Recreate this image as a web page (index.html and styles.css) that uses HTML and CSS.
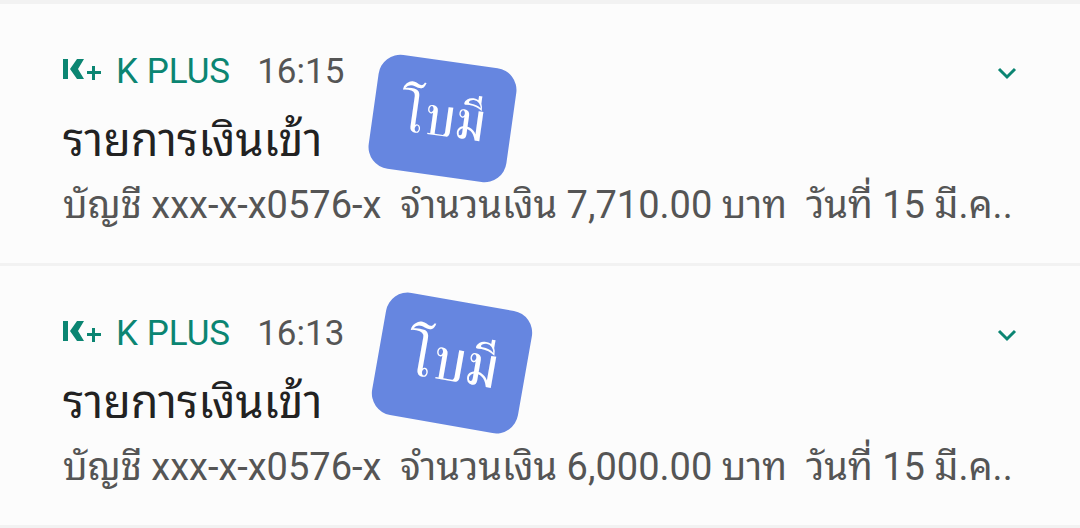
FILE: index.html
```html
<!DOCTYPE html>
<html lang="th">
<head>
    <meta charset="UTF-8">
    <meta name="viewport" content="width=device-width, initial-scale=1.0">
    <title>K PLUS</title>
    <link rel="stylesheet" href="styles.css">
</head>
<body>
    <main class="notifications">
        <article class="notification">
            <header class="notification-header">
                <svg class="logo" viewBox="0 0 40 24" aria-hidden="true">
                    <path d="M0 0h5v20H0z"/>
                    <path d="M14 0h7l-6 10 6 10h-7L7 10z"/>
                    <path d="M29 7h3v5h6v3h-6v6h-3v-6h-5v-3h5z"/>
                </svg>
                <span class="app-name">K PLUS</span>
                <time class="time">16:15</time>
                <button class="expand" type="button" aria-label="ขยาย">
                    <svg viewBox="0 0 24 24" aria-hidden="true"><path d="M5 10l8 8 8-8"/></svg>
                </button>
            </header>
            <h2 class="title">รายการเงินเข้า</h2>
            <p class="message">บัญชี xxx-x-x0576-x&nbsp; จำนวนเงิน 7,710.00 บาท&nbsp; วันที่ 15 มี.ค..</p>
            <span class="sticker sticker-small">โบมี</span>
        </article>

        <article class="notification">
            <header class="notification-header">
                <svg class="logo" viewBox="0 0 40 24" aria-hidden="true">
                    <path d="M0 0h5v20H0z"/>
                    <path d="M14 0h7l-6 10 6 10h-7L7 10z"/>
                    <path d="M29 7h3v5h6v3h-6v6h-3v-6h-5v-3h5z"/>
                </svg>
                <span class="app-name">K PLUS</span>
                <time class="time">16:13</time>
                <button class="expand" type="button" aria-label="ขยาย">
                    <svg viewBox="0 0 24 24" aria-hidden="true"><path d="M5 10l8 8 8-8"/></svg>
                </button>
            </header>
            <h2 class="title">รายการเงินเข้า</h2>
            <p class="message">บัญชี xxx-x-x0576-x&nbsp; จำนวนเงิน 6,000.00 บาท&nbsp; วันที่ 15 มี.ค..</p>
            <span class="sticker sticker-large">โบมี</span>
        </article>
    </main>
</body>
</html>
```

FILE: styles.css
```css
body {
    margin: 0;
    background-color: #fcfcfc;
    font-family: Roboto, "Noto Sans Thai Looped", "Noto Looped Thai", "Droid Sans Thai", Loma, Garuda, Waree, sans-serif;
    color: #555;
}

.notifications {
    border-top: 4px solid #f2f2f2;
}

.notification {
    position: relative;
    padding: 43px 62px 30px 63px;
    border-bottom: 3px solid #f2f2f2;
}

.notification-header {
    display: flex;
    align-items: center;
    height: 48px;
    margin-bottom: 10px;
    font-size: 35px;
}

.logo {
    width: 40px;
    height: 24px;
    margin-right: 13px;
    fill: #0b8572;
}

.app-name {
    color: #0b8572;
    margin-right: 27px;
}

.expand {
    width: 24px;
    height: 24px;
    margin-left: auto;
    padding: 0;
    border: none;
    background: none;
    cursor: pointer;
}

.expand svg {
    display: block;
    fill: none;
    stroke: #0b8572;
    stroke-width: 3;
}

.title {
    margin: 0;
    font-size: 45px;
    font-weight: 400;
    line-height: 72px;
    color: #222;
}

.message {
    margin: 0;
    font-size: 38px;
    line-height: 56px;
    white-space: nowrap;
}

/* stickers lie over the notification text */
.sticker {
    position: absolute;
    display: flex;
    justify-content: center;
    align-items: center;
    border-radius: 22px;
    background-color: #6686e0;
    color: #fff;
    font-family: Umpush, Laksaman, Sawasdee, FreeSerif, FreeSans, cursive;
}

.sticker-small {
    left: 373px;
    top: 57px;
    width: 139px;
    height: 115px;
    font-size: 56px;
    transform: rotate(8deg);
}

.sticker-large {
    left: 378px;
    top: 35px;
    width: 148px;
    height: 124px;
    font-size: 60px;
    transform: rotate(10deg);
}
```
